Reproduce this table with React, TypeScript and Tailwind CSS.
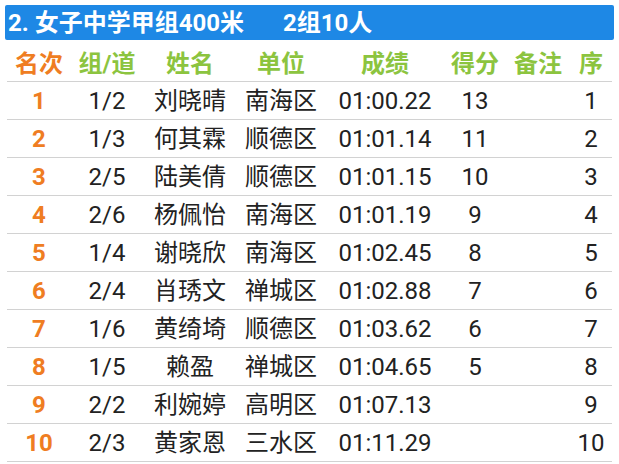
import React from 'react';

type Row = {
    rank: string;
    lane: string;
    name: string;
    unit: string;
    time: string;
    score: string;
    note: string;
    seq: string;
};

const rows: Row[] = [
    { rank: '1', lane: '1/2', name: '刘晓晴', unit: '南海区', time: '01:00.22', score: '13', note: '', seq: '1' },
    { rank: '2', lane: '1/3', name: '何其霖', unit: '顺德区', time: '01:01.14', score: '11', note: '', seq: '2' },
    { rank: '3', lane: '2/5', name: '陆美倩', unit: '顺德区', time: '01:01.15', score: '10', note: '', seq: '3' },
    { rank: '4', lane: '2/6', name: '杨佩怡', unit: '南海区', time: '01:01.19', score: '9', note: '', seq: '4' },
    { rank: '5', lane: '1/4', name: '谢晓欣', unit: '南海区', time: '01:02.45', score: '8', note: '', seq: '5' },
    { rank: '6', lane: '2/4', name: '肖琇文', unit: '禅城区', time: '01:02.88', score: '7', note: '', seq: '6' },
    { rank: '7', lane: '1/6', name: '黄绮埼', unit: '顺德区', time: '01:03.62', score: '6', note: '', seq: '7' },
    { rank: '8', lane: '1/5', name: '赖盈', unit: '禅城区', time: '01:04.65', score: '5', note: '', seq: '8' },
    { rank: '9', lane: '2/2', name: '利婉婷', unit: '高明区', time: '01:07.13', score: '', note: '', seq: '9' },
    { rank: '10', lane: '2/3', name: '黄家恩', unit: '三水区', time: '01:11.29', score: '', note: '', seq: '10' },
];

const grid = 'grid grid-cols-[64px_72px_94px_88px_120px_60px_66px_40px] items-center text-center';

export default function App() {
    return (
        <div className="w-[619px] h-[464px] bg-white px-[5px] pt-[5px] font-['Roboto','Noto_Sans_CJK_SC',sans-serif] overflow-hidden">
            <div className="h-[35px] bg-[#1e88e5] rounded-[2px] flex items-center pl-[3px] text-white font-bold text-[24px] leading-none">
                <span>2. 女子中学甲组400米</span>
                <span className="ml-[39px]">2组10人</span>
            </div>

            <div className="mx-[2px]">
                <div className={`${grid} h-[42px] pt-[6px] border-b border-[#d2d2d2] text-[24px] font-bold text-[#8cc43f] leading-none`}>
                    <div className="text-[#ef7d22]">名次</div>
                    <div>组/道</div>
                    <div>姓名</div>
                    <div>单位</div>
                    <div>成绩</div>
                    <div>得分</div>
                    <div>备注</div>
                    <div>序</div>
                </div>

                {rows.map(r => (
                    <div key={r.rank} className={`${grid} h-[38px] border-b border-[#d2d2d2] text-[24px] text-[#222] leading-none`}>
                        <div className="font-bold text-[#ef7d22]">{r.rank}</div>
                        <div>{r.lane}</div>
                        <div>{r.name}</div>
                        <div>{r.unit}</div>
                        <div>{r.time}</div>
                        <div>{r.score}</div>
                        <div>{r.note}</div>
                        <div>{r.seq}</div>
                    </div>
                ))}
            </div>
        </div>
    );
}
